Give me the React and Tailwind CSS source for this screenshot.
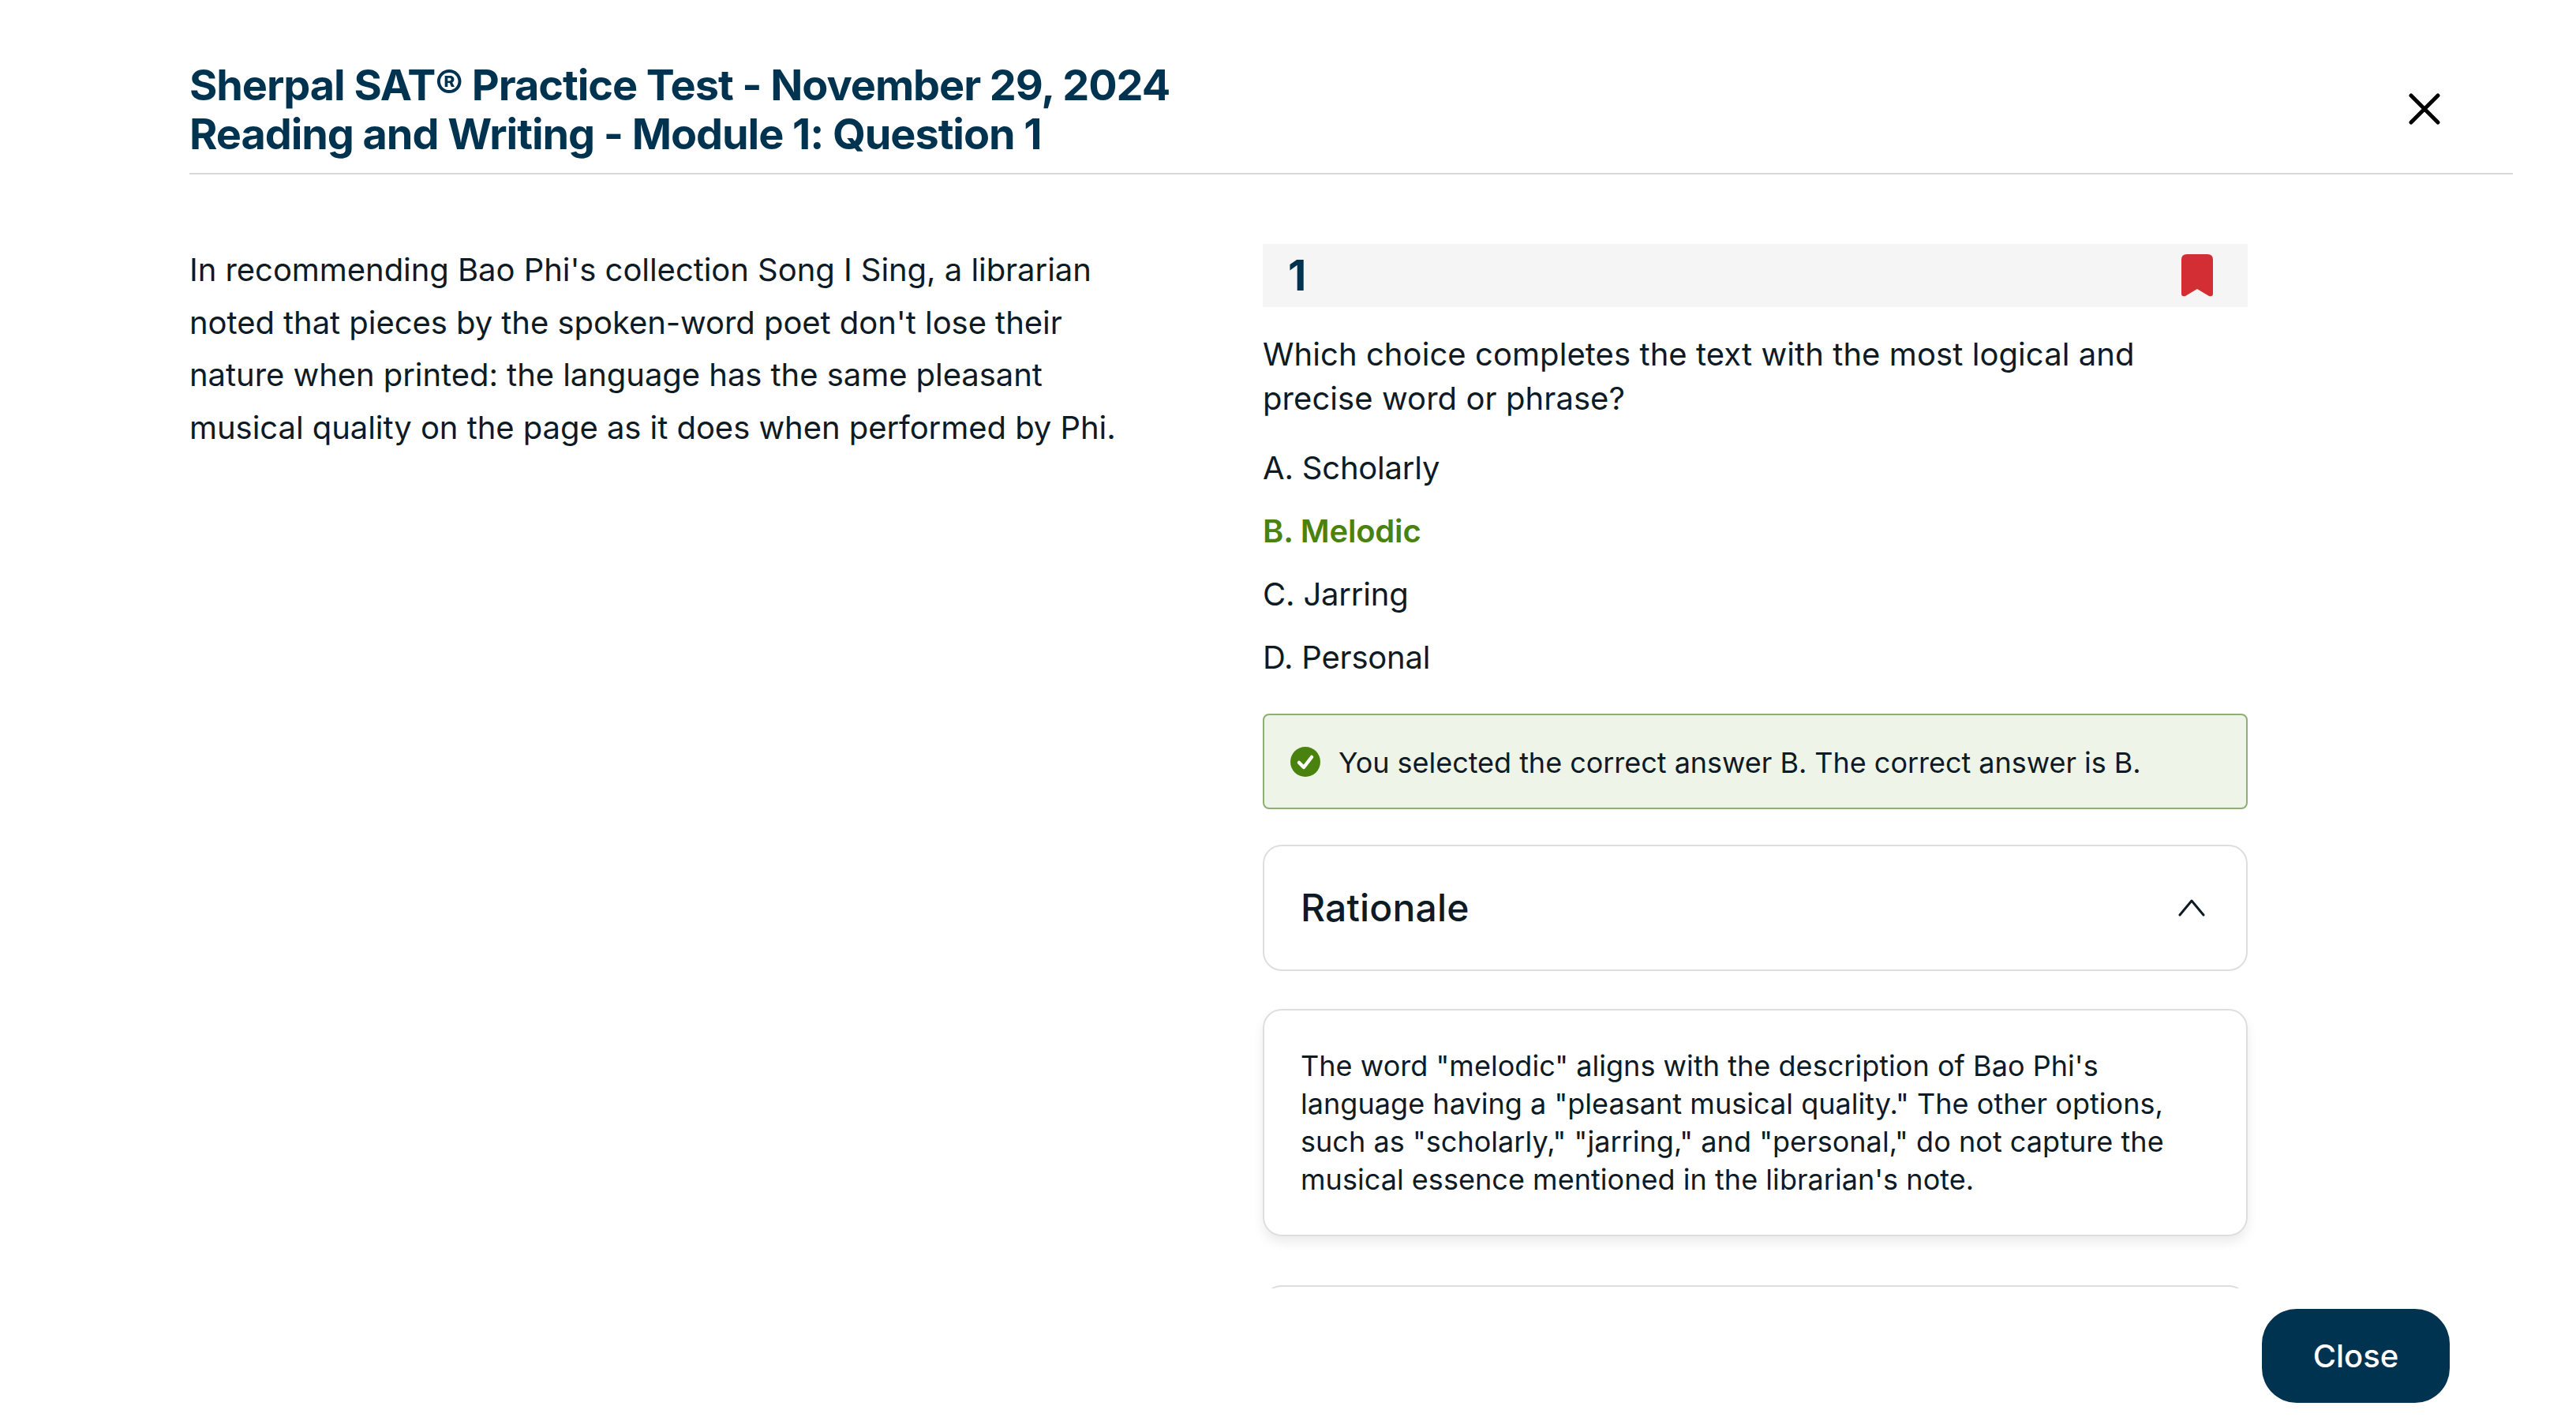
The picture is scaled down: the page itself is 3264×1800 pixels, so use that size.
export default function App() {
  return (
    <div className="h-[1800px] w-[3264px] overflow-hidden bg-white flex flex-col font-['Inter',sans-serif] text-[#0e1a24]">
      <header className="ml-[240px] mr-[80px] h-[221px] shrink-0 pt-[77px] border-b-2 border-[#d9d9d9] flex justify-between">
        <h1 className="text-[54px] leading-[62px] font-bold tracking-[-1.06px] text-[#003350]">
          Sherpal SAT® Practice Test - November 29, 2024<br />Reading and Writing - Module 1: Question 1
        </h1>
        <button className="mr-[92px] mt-[41px] w-[40px] h-[40px] self-start">
          <svg viewBox="0 0 40 40" className="w-[40px] h-[40px]" fill="none" stroke="#000" strokeWidth="5" strokeLinecap="round"><path d="M3 3 L37 37 M37 3 L3 37" /></svg>
        </button>
      </header>
      <main className="h-[1411px] shrink-0 overflow-hidden flex pl-[240px] pt-[88px]">
        <div className="w-[1360px] shrink-0">
          <p className="w-[1200px] text-[40px] leading-[66.5px] tracking-[-0.05px]">
            In recommending Bao Phi's collection Song I Sing, a librarian noted that pieces by the spoken-word poet don't lose their nature when printed: the language has the same pleasant musical quality on the page as it does when performed by Phi.
          </p>
        </div>
        <div className="w-[1248px] shrink-0">
          <div className="h-[80px] bg-[#f5f5f5] flex items-center justify-between pl-[32px] pr-[43px]">
            <span className="text-[54px] font-bold text-[#003350] leading-none">1</span>
            <svg viewBox="0 0 42 56" className="w-[42px] h-[56px]"><path d="M8 1 H34 Q41 1 41 8 V51 Q41 55 36 54 L21 45 L6 54 Q1 55 1 51 V8 Q1 1 8 1 Z" fill="#d22e33" /></svg>
          </div>
          <p className="mt-[32px] text-[40px] leading-[56px] tracking-[0.07px]">Which choice completes the text with the most logical and precise word or phrase?</p>
          <ul className="mt-[20px] text-[40px] leading-[56px] tracking-[-0.2px]">
            <li className="py-[12px]">A. Scholarly</li>
            <li className="py-[12px] font-semibold text-[#4a8210]">B. Melodic</li>
            <li className="py-[12px]">C. Jarring</li>
            <li className="py-[12px]">D. Personal</li>
          </ul>
          <div className="mt-[31px] h-[121px] border-2 border-[#8fae75] rounded-[8px] bg-[#eef4e7] flex items-center pl-[32px] text-[36px] gap-[22px] tracking-[-0.03px]">
            <svg viewBox="0 0 40 40" className="w-[40px] h-[40px] shrink-0"><circle cx="20" cy="20" r="19" fill="#4a8210" /><path d="M12 21 L18 27 L28 14" fill="none" stroke="#fff" strokeWidth="4.5" strokeLinecap="round" strokeLinejoin="round" /></svg>
            <span className="pt-[2px]">You selected the correct answer B. The correct answer is B.</span>
          </div>
          <div className="mt-[45px] h-[160px] border-2 border-[#dedede] rounded-[24px] flex items-center justify-between pl-[46px] pr-[52px]">
            <span className="text-[48px] font-medium tracking-[0.2px]">Rationale</span>
            <svg viewBox="0 0 34 24" className="w-[34px] h-[24px]" fill="none" stroke="#0e1a24" strokeWidth="3" strokeLinecap="round" strokeLinejoin="round"><path d="M2 21 L17 3 L32 21" /></svg>
          </div>
          <div className="mt-[48px] border-2 border-[#dedede] rounded-[24px] px-[46px] py-[46px] text-[36px] leading-[48px] tracking-[0.04px] shadow-[0_8px_14px_rgba(0,0,0,0.08)]">
            The word "melodic" aligns with the description of Bao Phi's language having a "pleasant musical quality." The other options, such as "scholarly," "jarring," and "personal," do not capture the musical essence mentioned in the librarian's note.
          </div>
          <div className="mt-[62px] h-[100px] border-2 border-[#dedede] rounded-[24px]" />
        </div>
      </main>
      <footer className="flex-1 flex justify-end items-start pr-[160px] pt-[26px]">
        <button className="w-[238px] h-[119px] rounded-[44px] bg-[#003350] text-white text-[40px] font-medium">Close</button>
      </footer>
    </div>
  );
}
